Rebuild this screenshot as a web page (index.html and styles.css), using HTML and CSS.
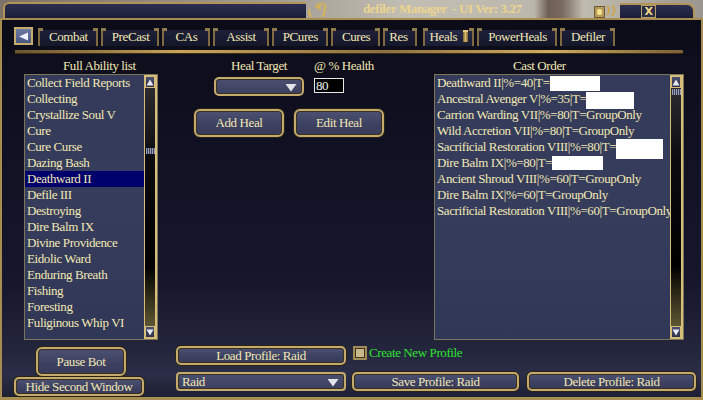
FILE: index.html
```html
<!DOCTYPE html>
<html lang="en">
<head>
    <meta charset="UTF-8">
    <meta name="viewport" content="width=device-width, initial-scale=1.0">
    <title>defiler Manager - UI Ver: 3.27</title>
    <link rel="stylesheet" href="styles.css">
</head>
<body>
    <!-- Title Bar -->
    <div class="title-bar">
        <div class="title-cap-left"></div>
        <svg class="swirl" width="26" height="16" viewBox="0 0 26 16">
            <path d="M13 8.5 a1.8 1.6 0 1 0 -2.5 -1.5 a4.5 4 0 1 1 7.5 2.5 a7.5 6.5 0 1 1 -14 -1" fill="none" stroke="#d2b25a" stroke-width="2.2"/>
        </svg>
        <div class="title-text">defiler Manager &nbsp;- UI Ver: 3.27</div>
        <div class="title-min"><span></span></div>
        <svg class="swirl-small" width="15" height="14" viewBox="0 0 15 14">
            <path d="M2 3 q4 4 0 9 M7 2 q5 5 0 11" fill="none" stroke="#c9a755" stroke-width="2"/>
        </svg>
        <div class="title-cap-right">
            <div class="title-close">X</div>
        </div>
    </div>

    <!-- Main Window -->
    <div class="window">
        <div class="tab-row">
            <div class="back-btn">
                <svg width="11" height="9" viewBox="0 0 11 9"><path d="M1 4.5 L10 0.5 L10 8.5 Z" fill="#eef0ff"/></svg>
            </div>
            <div class="tab">Combat</div>
            <div class="tab">PreCast</div>
            <div class="tab tab-wide">CAs</div>
            <div class="tab tab-wide">Assist</div>
            <div class="tab">PCures</div>
            <div class="tab">Cures</div>
            <div class="tab tab-narrow">Res</div>
            <div class="tab tab-active">Heals<span class="tab-pin"></span></div>
            <div class="tab">PowerHeals</div>
            <div class="tab">Defiler</div>
        </div>
        <div class="gold-rule"></div>

        <div class="panels">
            <!-- Full Ability list -->
            <div class="col">
                <div class="col-label label-left">Full Ability list</div>
                <div class="listbox">
                    <ul class="list-items">
                        <li>Collect Field Reports</li>
                        <li>Collecting</li>
                        <li>Crystallize Soul V</li>
                        <li>Cure</li>
                        <li>Cure Curse</li>
                        <li>Dazing Bash</li>
                        <li class="selected">Deathward II</li>
                        <li>Defile III</li>
                        <li>Destroying</li>
                        <li>Dire Balm IX</li>
                        <li>Divine Providence</li>
                        <li>Eidolic Ward</li>
                        <li>Enduring Breath</li>
                        <li>Fishing</li>
                        <li>Foresting</li>
                        <li>Fuliginous Whip VI</li>
                    </ul>
                    <div class="scroll">
                        <div class="scroll-btn">
                            <svg width="8" height="7" viewBox="0 0 8 7"><path d="M4 0.5 L7.5 6.5 L0.5 6.5 Z" fill="#e8eaf4"/></svg>
                        </div>
                        <div class="scroll-track">
                            <div class="scroll-thumb thumb-mid"></div>
                        </div>
                        <div class="scroll-btn">
                            <svg width="8" height="7" viewBox="0 0 8 7"><path d="M0.5 0.5 L7.5 0.5 L4 6.5 Z" fill="#e8eaf4"/></svg>
                        </div>
                    </div>
                </div>
            </div>

            <!-- Heal controls -->
            <div class="col-mid">
                <div class="field-row">
                    <div class="field field-target">
                        <div class="col-label">Heal Target</div>
                        <div class="dropdown dd-target">
                            <span></span>
                            <svg class="dd-arrow" width="12" height="9" viewBox="0 0 12 9"><path d="M0.5 1 L11.5 1 L6 8.5 Z" fill="#e4e4ea"/></svg>
                        </div>
                    </div>
                    <div class="field">
                        <div class="col-label">@ % Health</div>
                        <div class="pct-input">80</div>
                    </div>
                </div>
                <div class="btn-row">
                    <button class="gold-btn btn-heal">Add Heal</button>
                    <button class="gold-btn btn-heal">Edit Heal</button>
                </div>
            </div>

            <!-- Cast Order -->
            <div class="col">
                <div class="col-label label-cast">Cast Order</div>
                <div class="listbox">
                    <ul class="list-items">
                        <li>Deathward II|%=40|T=<span class="redact r-a"></span></li>
                        <li>Ancestral Avenger V|%=35|T=<span class="redact r-b"></span></li>
                        <li>Carrion Warding VII|%=80|T=GroupOnly</li>
                        <li>Wild Accretion VII|%=80|T=GroupOnly</li>
                        <li>Sacrificial Restoration VIII|%=80|T=<span class="redact r-c"></span></li>
                        <li>Dire Balm IX|%=80|T=<span class="redact r-d"></span></li>
                        <li>Ancient Shroud VIII|%=60|T=GroupOnly</li>
                        <li>Dire Balm IX|%=60|T=GroupOnly</li>
                        <li>Sacrificial Restoration VIII|%=60|T=GroupOnly</li>
                    </ul>
                    <div class="scroll">
                        <div class="scroll-btn">
                            <svg width="8" height="7" viewBox="0 0 8 7"><path d="M4 0.5 L7.5 6.5 L0.5 6.5 Z" fill="#e8eaf4"/></svg>
                        </div>
                        <div class="scroll-track">
                            <div class="scroll-thumb"></div>
                        </div>
                        <div class="scroll-btn">
                            <svg width="8" height="7" viewBox="0 0 8 7"><path d="M0.5 0.5 L7.5 0.5 L4 6.5 Z" fill="#e8eaf4"/></svg>
                        </div>
                    </div>
                </div>
            </div>
        </div>

        <!-- Footer -->
        <div class="footer">
            <div class="foot-left">
                <button class="gold-btn btn-pause">Pause Bot</button>
                <button class="gold-btn btn-hide">Hide Second Window</button>
            </div>
            <div class="foot-right">
                <div class="foot-row">
                    <button class="gold-btn btn-profile">Load Profile: Raid</button>
                    <span class="checkbox"></span>
                    <span class="create-label">Create New Profile</span>
                </div>
                <div class="foot-row foot-row2">
                    <div class="dropdown dd-profile">
                        <span>Raid</span>
                        <svg class="dd-arrow" width="12" height="9" viewBox="0 0 12 9"><path d="M0.5 1 L11.5 1 L6 8.5 Z" fill="#e4e4ea"/></svg>
                    </div>
                    <button class="gold-btn btn-save">Save Profile: Raid</button>
                    <button class="gold-btn btn-delete">Delete Profile: Raid</button>
                </div>
            </div>
        </div>
    </div>
</body>
</html>
```

FILE: styles.css
```css
/* General */
* {
    box-sizing: border-box;
}

body {
    margin: 0;
    width: 703px;
    height: 400px;
    overflow: hidden;
    font-family: 'Liberation Serif', 'Times New Roman', serif;
    font-size: 13px;
    letter-spacing: -0.4px;
    color: #f2e8b4;
    background: linear-gradient(90deg, #7d7268 0%, #a39d94 40%, #c2beb4 58%, #bcb7ac 76%, #6e5e55 78%, #7a6a60 80%, #c0bbb0 83%, #9b978e 100%);
}

/* Title Bar */
.title-bar {
    display: flex;
    align-items: flex-end;
    height: 18px;
}

.title-cap-left {
    width: 303px;
    height: 16px;
    margin-left: 3px;
    background: linear-gradient(#2c3050, #1b1d37);
    border: 2px solid #b09458;
    border-bottom: none;
    border-right: none;
    border-radius: 6px 0 0 0;
}

.swirl {
    align-self: center;
}

.title-text {
    width: 262px;
    padding-left: 31px;
    align-self: center;
    font-weight: bold;
    font-size: 13px;
    letter-spacing: -0.4px;
    color: #ecd58f;
    white-space: nowrap;
}

.title-min {
    width: 11px;
    height: 12px;
    background: #b49a5c;
    border: 1px solid #6d5a30;
    display: flex;
    align-items: center;
    justify-content: center;
}

.title-min span {
    width: 5px;
    height: 6px;
    border-radius: 2px;
    background: #f4e08a;
}

.swirl-small {
    margin-bottom: 1px;
}

.title-cap-right {
    width: 75px;
    height: 15px;
    background: linear-gradient(#2c3050, #1b1d37);
    border: 2px solid #b09458;
    border-bottom: none;
    border-left: none;
    border-radius: 0 8px 0 0;
    padding-left: 21px;
}

.title-close {
    width: 15px;
    height: 13px;
    background: #2a2d48;
    border: 1px solid #b8a064;
    color: #f0d888;
    font-family: 'DejaVu Sans', sans-serif;
    font-weight: bold;
    font-size: 11px;
    line-height: 11px;
    text-align: center;
}

/* Main Window */
.window {
    height: 382px;
    border: 2px solid #a88d52;
    border-bottom-width: 3px;
    padding: 7px 2px 0 12px;
    background: linear-gradient(#0c0c18 0%, #101022 30%, #16172c 70%, #24263d 88%, #2c2e47 94%, #1d1f33 100%);
}

/* Tabs */
.tab-row {
    display: flex;
    align-items: flex-end;
    height: 19px;
}

.back-btn {
    width: 19px;
    height: 18px;
    margin-right: 5px;
    align-self: flex-start;
    border: 2px solid #c7ad6d;
    background: linear-gradient(#6d7aa4, #48557e);
    display: flex;
    align-items: center;
    justify-content: center;
}

.tab {
    position: relative;
    height: 16px;
    padding: 0 8px 0 9px;
    margin-right: 3px;
    line-height: 14px;
    white-space: nowrap;
    background: linear-gradient(#1d2038, #141629);
    border-left: 2px solid #7f6a42;
    border-right: 2px solid #7f6a42;
}

.tab::before,
.tab::after {
    content: "";
    position: absolute;
    top: -2px;
    width: 5px;
    height: 3px;
    background: #8f7a4c;
}

.tab::before {
    left: -2px;
}

.tab::after {
    right: -2px;
}

.tab-wide {
    padding: 0 11px 0 11px;
}

.tab-narrow {
    padding: 0 7px 0 4px;
    margin-right: 6px;
}

.tab-active {
    padding: 0 4px 0 5px;
    background: linear-gradient(#262a48, #1a1c34);
}

.tab-pin {
    display: inline-block;
    width: 5px;
    height: 12px;
    margin-left: 6px;
    vertical-align: -1px;
    background: linear-gradient(90deg, #7a6232, #d8b868, #7a6232);
    border-top: 2px solid #e8cc80;
}

.gold-rule {
    height: 4px;
    margin: 4px 16px 0 1px;
    background: linear-gradient(90deg, #6b5530, #c9a45a 25%, #8f7040 55%, #d0ac60 80%, #7a6035);
    border-bottom: 1px solid #3a2c16;
}

/* Panels */
.panels {
    display: grid;
    grid-template-columns: 134px 276px 250px;
    margin: 5px 0 0 10px;
}

.col-label {
    height: 15px;
    line-height: 13px;
    white-space: nowrap;
}

.label-left {
    padding-left: 39px;
}

.label-cast {
    padding-left: 79px;
}

.listbox {
    display: flex;
    height: 266px;
    border: 1px solid #7c7558;
    background: linear-gradient(#333a5a, #363d5c 50%, #313756);
}

.list-items {
    flex: 1;
    margin: 0;
    padding: 0;
    list-style: none;
    overflow: hidden;
}

.list-items li {
    display: flex;
    align-items: center;
    height: 16px;
    padding-left: 2px;
    line-height: 16px;
    white-space: nowrap;
}

.list-items li.selected {
    background: #00006c;
}

.redact {
    flex: none;
    height: 15px;
    background: #ffffff;
}

.r-a { width: 50px; margin-top: 1px; }
.r-b { width: 48px; height: 17px; margin-top: 2px; }
.r-c { width: 47px; height: 20px; margin-top: 4px; }
.r-d { width: 51px; height: 14px; }

/* Scrollbar */
.scroll {
    display: flex;
    flex-direction: column;
    width: 13px;
    border: 1px solid #d6bd7a;
    border-right-width: 2px;
    background: #000;
}

.scroll-btn {
    height: 12px;
    border: 1px solid #d6bd7a;
    background: linear-gradient(#4b5070, #2c304a);
    display: flex;
    align-items: center;
    justify-content: center;
}

.scroll-track {
    flex: 1;
    background: linear-gradient(#2a2a30, #0c0c10 30%, #000 75%, #5d5732);
}

.scroll-thumb {
    width: 9px;
    height: 6px;
    margin: 1px auto 0;
    background: repeating-linear-gradient(90deg, #9aa0b8 0 1px, #3c405a 1px 2px);
}

.thumb-mid {
    margin-top: 60px;
}

/* Middle column */
.col-mid {
    display: flex;
    flex-direction: column;
}

.field-row {
    display: flex;
    margin-left: 56px;
    gap: 10px;
}

.field-target .col-label {
    text-align: center;
}

.dropdown {
    display: flex;
    align-items: center;
    justify-content: space-between;
    height: 19px;
    margin-top: 3px;
    padding: 0 5px 0 4px;
    border: 2px solid #c4aa6c;
    border-radius: 5px;
    box-shadow: inset 0 0 0 1px #3a3020;
    background: linear-gradient(#4a4f70, #3c4060);
}

.dd-target {
    width: 90px;
}

.dd-arrow {
    margin-top: 1px;
}

.pct-input {
    width: 30px;
    height: 15px;
    margin-top: 4px;
    padding-left: 1px;
    border: 1px solid #e8e8e8;
    background: #000;
    color: #f4f4f4;
    line-height: 13px;
    letter-spacing: -0.6px;
}

.btn-row {
    display: flex;
    gap: 10px;
    margin: 13px 0 0 36px;
}

.gold-btn {
    font-family: inherit;
    font-size: 13px;
    letter-spacing: -0.4px;
    color: #f2e8b4;
    padding: 0;
    border: 2px solid #c4aa6c;
    border-radius: 6px;
    box-shadow: inset 0 0 0 1px #3a3020, 0 0 0 1px #2a2416;
    background: linear-gradient(#4c5172, #3d4162 55%, #383b58);
    white-space: nowrap;
}

.btn-heal {
    width: 90px;
    height: 28px;
}

/* Footer */
.footer {
    display: flex;
    margin-top: 6px;
}

.foot-left {
    display: flex;
    flex-direction: column;
    width: 162px;
}

.btn-pause {
    width: 90px;
    height: 29px;
    margin: 1px 0 0 22px;
}

.btn-hide {
    width: 130px;
    height: 19px;
    margin-top: 1px;
    border-radius: 5px;
}

.foot-right {
    display: flex;
    flex-direction: column;
}

.foot-row {
    display: flex;
    align-items: flex-start;
}

.foot-row2 {
    margin-top: 7px;
}

.btn-profile {
    width: 170px;
    height: 19px;
    border-radius: 5px;
}

.checkbox {
    width: 14px;
    height: 14px;
    margin-left: 7px;
    border: 2px solid #a08a55;
    box-shadow: inset 0 0 0 1px #40341c;
    background: #c9b88c;
}

.create-label {
    margin-left: 2px;
    line-height: 13px;
    color: #2ee22e;
}

.dd-profile {
    width: 170px;
    margin-top: 0;
    border-radius: 4px;
}

.btn-save {
    width: 167px;
    height: 19px;
    margin-left: 6px;
    border-radius: 5px;
}

.btn-delete {
    width: 169px;
    height: 19px;
    margin-left: 8px;
    border-radius: 5px;
}
```
